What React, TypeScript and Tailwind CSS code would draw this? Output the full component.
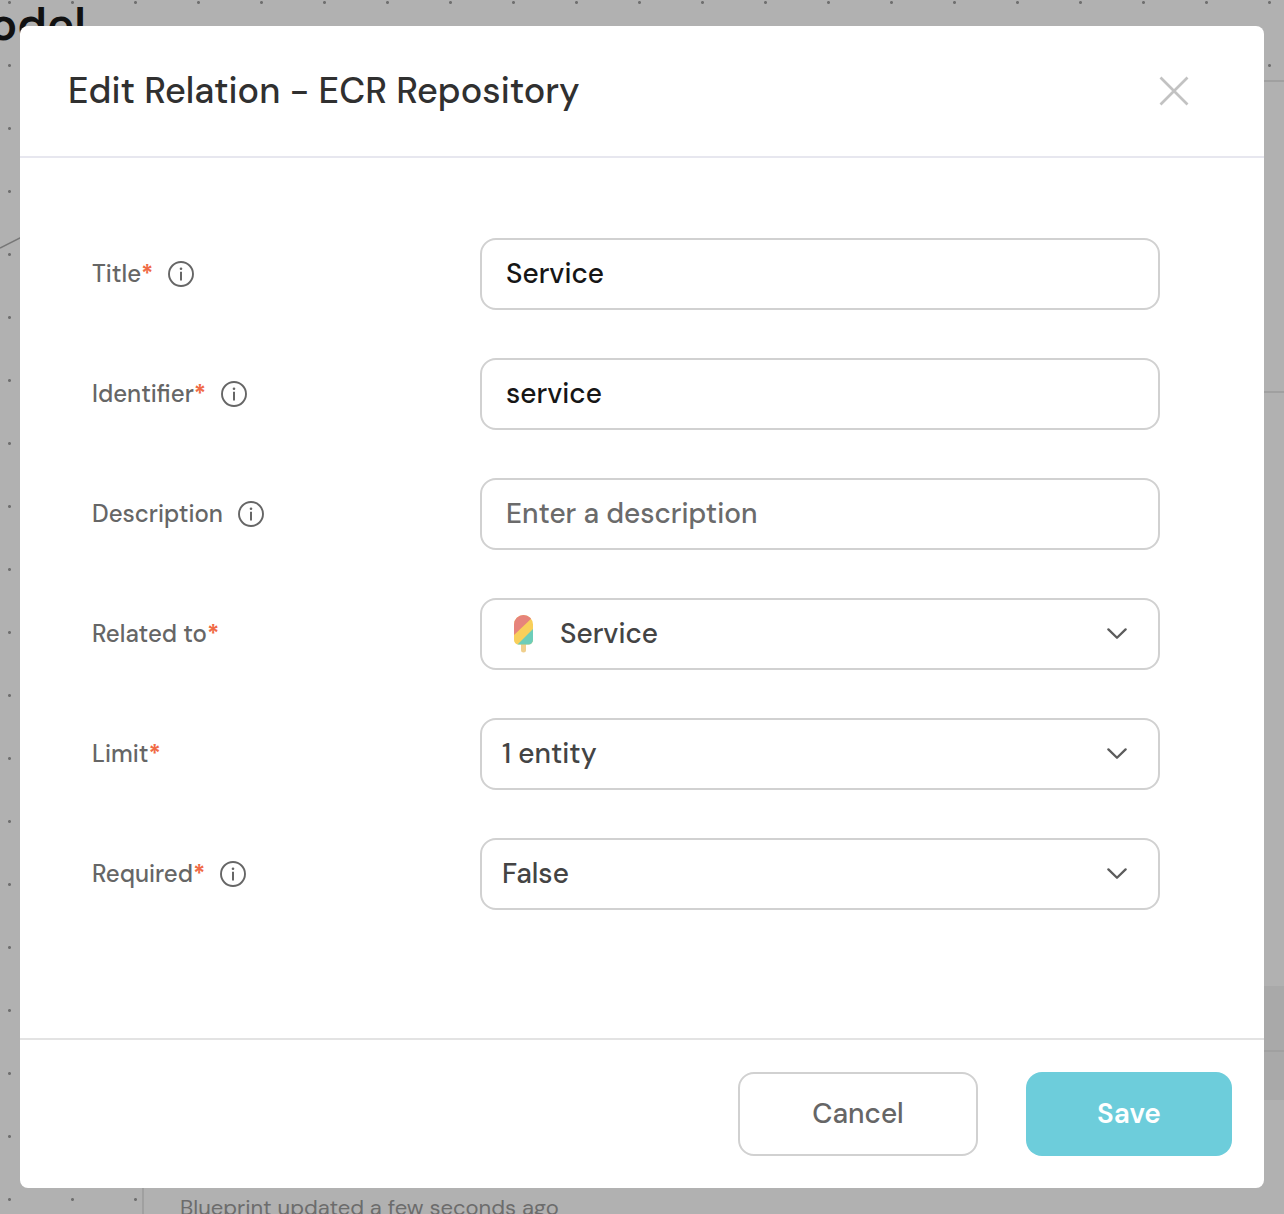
import { ReactNode, useState } from "react";

function InfoIcon() {
  return (
    <svg width="26" height="26" viewBox="0 0 26 26" fill="none" aria-hidden="true">
      <circle cx="13" cy="13" r="12" stroke="#666666" strokeWidth="1.9" />
      <circle cx="13" cy="7.7" r="1.3" fill="#666666" />
      <path d="M13 10.8v8.6" stroke="#666666" strokeWidth="2" />
    </svg>
  );
}

function PopsicleIcon() {
  return (
    <svg width="20" height="38" viewBox="0 0 20 38" aria-hidden="true">
      <defs>
        <clipPath id="popsicle-body">
          <path d="M0 9.5a9.5 9.5 0 0 1 19 0V25a4.5 4.5 0 0 1-4.5 4.5h-10A4.5 4.5 0 0 1 0 25z" />
        </clipPath>
      </defs>
      <path d="M7 29h5v6a2.5 2.5 0 0 1-5 0z" fill="#F0CF8C" />
      <g clipPath="url(#popsicle-body)">
        <rect width="19" height="30" fill="#F8CF5A" />
        <path d="M0 0h19v2L0 20z" fill="#E6837B" />
        <path d="M19 14v16H3z" fill="#6CCDB9" />
      </g>
    </svg>
  );
}

function Field({
  id,
  label,
  required,
  info,
  children,
}: {
  id: string;
  label: string;
  required?: boolean;
  info?: boolean;
  children: ReactNode;
}) {
  return (
    <div className="flex items-center">
      <div className="flex w-[388px] shrink-0 items-center gap-[15px]">
        <label htmlFor={id} className="text-[24px] leading-8 font-medium text-[#666666]">
          {label}
          {required && <span className="font-bold text-[#F06A45]">*</span>}
        </label>
        {info && (
          <button type="button" aria-label={`About ${label}`}>
            <InfoIcon />
          </button>
        )}
      </div>
      <div className="relative min-w-0 flex-1">{children}</div>
    </div>
  );
}

const control =
  "block h-[72px] w-full rounded-2xl border-2 border-[#D1D1D1] bg-white text-[28px] font-medium outline-none";

function TextField({ id, initial, placeholder }: { id: string; initial: string; placeholder?: string }) {
  const [value, setValue] = useState(initial);
  return (
    <input
      id={id}
      type="text"
      value={value}
      placeholder={placeholder}
      onChange={(e) => setValue(e.target.value)}
      className={`${control} px-6 pb-0.5 text-[#161616] placeholder:text-[#6B6B6B]`}
    />
  );
}

function SelectField({ id, options, icon }: { id: string; options: string[]; icon?: ReactNode }) {
  return (
    <>
      <select
        id={id}
        defaultValue={options[0]}
        className={`${control} appearance-none pr-16 text-[#444444] ${icon ? "pl-[78px]" : "pl-5"}`}
      >
        {options.map((o) => (
          <option key={o}>{o}</option>
        ))}
      </select>
      {icon && <span className="pointer-events-none absolute inset-y-0 left-[34px] flex items-center">{icon}</span>}
      <span className="pointer-events-none absolute inset-y-0 right-[33px] flex items-center">
        <svg width="20" height="12" viewBox="0 0 20 12" fill="none" aria-hidden="true">
          <path
            d="M1.4 1.4 10 9.8l8.600-8.400"
            stroke="#5C5C5C"
            strokeWidth="2.3"
            strokeLinecap="round"
            strokeLinejoin="round"
          />
        </svg>
      </span>
    </>
  );
}

function Canvas() {
  return (
    <div
      aria-hidden="true"
      className="absolute inset-0 overflow-hidden bg-[#B1B1B1] bg-[radial-gradient(circle_at_center,#6F6F6F_1px,transparent_2px)] bg-[length:63px_63px] bg-[position:-22px_-29px]"
    >
      <p className="absolute top-0 left-0 flex h-12 w-[86px] items-center justify-end text-[46px] leading-[48px] font-semibold text-[#111111]">
        odel
      </p>
      <svg className="absolute top-[236px] left-0" width="22" height="14" viewBox="0 0 22 14">
        <path d="M0 12 22 1" stroke="#777777" strokeWidth="1.5" />
      </svg>
      <div className="absolute top-20 -right-4 bottom-[-40px] left-[142px] flex flex-col justify-between border-2 border-[#A0A0A0] bg-[#B1B1B1]">
        <div className="h-[311px] border-b-2 border-[#A0A0A0]" />
        <div>
          <div className="h-[66px] border-b-2 border-[#A0A0A0] bg-[#A9A9A9]" />
          <div className="h-12 bg-[#A9A9A9]" />
          <p className="mt-[94px] h-[58px] px-9 text-[22px] leading-7 text-[#6C6C6C]">
            Blueprint updated a few seconds ago
          </p>
        </div>
      </div>
    </div>
  );
}

export default function App() {
  return (
    <main className="relative min-h-screen px-5 py-[26px] font-['DM_Sans',Inter,sans-serif]">
      <Canvas />
      <form
        role="dialog"
        aria-labelledby="dialog-title"
        onSubmit={(e) => e.preventDefault()}
        className="relative rounded-lg bg-white"
      >
        <header className="flex h-[132px] items-center justify-between border-b-2 border-[#E7E7EF] pr-[74px] pl-12">
          <h1 id="dialog-title" className="text-[36px] leading-10 font-medium text-[#303030]">
            Edit Relation - ECR Repository
          </h1>
          <button type="button" aria-label="Close">
            <svg width="32" height="32" viewBox="0 0 32 32" fill="none" aria-hidden="true">
              <path d="m2.5 2.5 27 27M29.5 2.5l-27 27" stroke="#C2C2C2" strokeWidth="2.7" />
            </svg>
          </button>
        </header>

        <div className="flex flex-col gap-12 pt-20 pr-[104px] pb-32 pl-[72px]">
          <Field id="title" label="Title" required info>
            <TextField id="title" initial="Service" />
          </Field>
          <Field id="identifier" label="Identifier" required info>
            <TextField id="identifier" initial="service" />
          </Field>
          <Field id="description" label="Description" info>
            <TextField id="description" initial="" placeholder="Enter a description" />
          </Field>
          <Field id="related" label="Related to" required>
            <SelectField id="related" options={["Service"]} icon={<PopsicleIcon />} />
          </Field>
          <Field id="limit" label="Limit" required>
            <SelectField id="limit" options={["1 entity"]} />
          </Field>
          <Field id="required" label="Required" required info>
            <SelectField id="required" options={["False"]} />
          </Field>
        </div>

        <footer className="flex justify-end gap-12 border-t-2 border-[#E3E3E3] p-8">
          <button
            type="button"
            className="h-[84px] w-60 rounded-2xl border-2 border-[#D1D1D1] text-[28px] font-medium text-[#666666]"
          >
            Cancel
          </button>
          <button
            type="submit"
            className="h-[84px] w-[206px] rounded-2xl bg-[#6DCDDB] text-[28px] font-semibold text-white"
          >
            Save
          </button>
        </footer>
      </form>
    </main>
  );
}
